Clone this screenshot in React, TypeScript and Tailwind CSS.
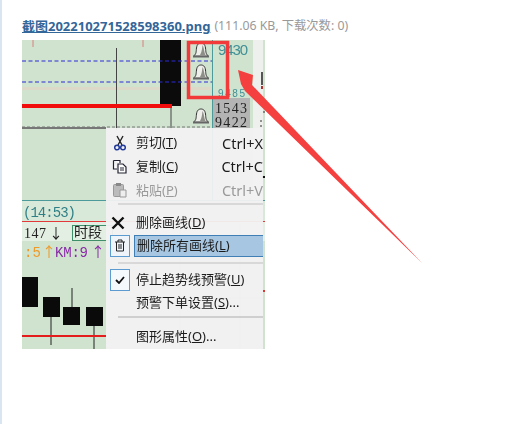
const cjk = '"Noto Sans","Noto Sans CJK SC",sans-serif';

function Bell({ x, y }: { x: number; y: number }) {
  return (
    <g transform={`translate(${x} ${y})`}>
      <path d="M-7.500 6 C-4.500 4 -5 2 -4.500 -2 C-4 -6 -2 -7 0 -7 C2 -7 4 -6 4.500 -2 C5 2 4.500 4 7.500 6 Z" fill="#eeeeea" stroke="#333" strokeWidth="1" />
      <path d="M1.500 -5 C3 -3 3 2 4.500 5 L-1 5 C1 2 1 -2 1.500 -5Z" fill="#8f8f8a" />
      <rect x="-8" y="6" width="16" height="1.500" fill="#666" />
    </g>
  );
}

function Chart() {
  return (
    <svg width="243" height="309" viewBox="22 40 243 309" className="absolute left-0 top-0 block">
      <rect x="22" y="40" width="243" height="309" fill="#cfe3cf" />
      <rect x="253" y="40" width="10" height="160" fill="#eef0ee" />
      <rect x="22" y="87" width="190" height="3" fill="#dcd9c9" />
      <rect x="212" y="40" width="1" height="160" fill="#4d9a9a" />
      <path d="M33 40V47M143 40V47" stroke="#d88080" strokeWidth="1" />
      <rect x="160" y="40" width="21" height="66" fill="#0b0b0b" />
      <path d="M22 61H212M22 82H212" stroke="#2a2ad8" strokeWidth="1" strokeDasharray="4 2.500" />
      <path d="M116.500 48V130M171 106V130" stroke="#444" strokeWidth="1" />
      <rect x="22" y="104" width="150" height="4" fill="#f20d0d" />
      <Bell x={201} y={50} />
      <Bell x={201} y={72} />
      <Bell x={201} y={116} />
      <text x="218" y="55" fontSize="15" fill="#3f8f96" fontFamily="Liberation Sans, sans-serif" textLength="30">9430</text>
      <text x="218" y="97" fontSize="10" fill="#3f8f96" fontFamily="Liberation Sans, sans-serif" textLength="27">9485</text>
      <rect x="213" y="98" width="37" height="31" fill="#b4b4b4" />
      <text x="215" y="113" fontSize="14" fill="#222" fontFamily="Liberation Serif, serif" textLength="32">1543</text>
      <text x="215" y="127" fontSize="14" fill="#222" fontFamily="Liberation Serif, serif" textLength="32">9422</text>
      <path d="M22 127H212" stroke="#777" strokeWidth="1" strokeDasharray="3 2" />
      <rect x="22" y="127" width="84" height="2" fill="#777" />
      <path d="M262 72V85" stroke="#222" strokeWidth="1.500" />
      <rect x="261" y="86" width="2" height="3" fill="#b03030" />
      <path d="M263 112H265M260 121H262M260 126H262" stroke="#333" strokeWidth="1" />
      <rect x="22" y="200" width="243" height="1" fill="#4d9a9a" />
      <rect x="22" y="201" width="243" height="20" fill="#d9e9d9" />
      <text x="23" y="217" fontSize="14" fill="#2f7f86" fontFamily="Liberation Mono, monospace" textLength="53">(14:53)</text>
      <rect x="22" y="221" width="243" height="1" fill="#e23a3a" />
      <rect x="22" y="222" width="243" height="19" fill="#e4efe4" />
      <text x="24" y="238" fontSize="14" fill="#222" fontFamily="Liberation Serif, serif" textLength="22">147</text>
      <text x="49" y="238" fontSize="14" fill="#222" fontFamily={cjk}>↓</text>
      <rect x="72.500" y="225.500" width="40" height="15" fill="none" stroke="#3f8f6a" />
      <text x="74" y="237" fontSize="14" fill="#222" fontFamily={cjk}>时段</text>
      <text x="24" y="257" fontSize="14" fill="#ee9a2a" fontFamily="Liberation Mono, monospace">:5</text>
      <text x="42" y="257" fontSize="14" fill="#ee9a2a" fontFamily={cjk}>↑</text>
      <text x="55" y="257" fontSize="14" fill="#8a2aa8" fontFamily="Liberation Mono, monospace" textLength="33">KM:9</text>
      <text x="91" y="257" fontSize="14" fill="#8a2aa8" fontFamily={cjk}>↑</text>
      <rect x="22" y="277" width="16" height="30" fill="#0a0a0a" />
      <rect x="43" y="297" width="17" height="20" fill="#0a0a0a" />
      <rect x="63" y="307" width="17" height="18" fill="#0a0a0a" />
      <rect x="86" y="307" width="17" height="19" fill="#0a0a0a" />
      <path d="M51 317V345M72 288V307M94 326V349" stroke="#222" strokeWidth="1" />
      <rect x="22" y="335" width="84" height="2" fill="#e51c1c" />
      <path d="M110 298H263M240 200V349M180 200V349" stroke="#b9b9b9" strokeWidth="1" opacity="0.4" />
      <rect x="262" y="176" width="3" height="2" fill="#111" />
      <rect x="263" y="290" width="2" height="2" fill="#d33" />
    </svg>
  );
}

function Row({ text, u, after, shortcut, dim, h, icon }: { text: string; u: string; after?: string; shortcut?: string; dim?: boolean; h: string; icon?: React.ReactNode }) {
  return (
    <div className={`flex items-center ${h}`}>
      <div className="flex w-[29px] shrink-0 items-center justify-center">{icon}</div>
      <span className={`whitespace-nowrap text-[13px] leading-none ${dim ? "text-[#9a9a9a]" : "text-[#1c1c1c]"}`}>
        {text}(<span className="underline">{u}</span>){after}
      </span>
      {shortcut && <span className={`ml-auto whitespace-nowrap text-[14.500px] leading-none ${dim ? "text-[#9a9a9a]" : "text-[#1c1c1c]"}`}>{shortcut}</span>}
    </div>
  );
}

function Menu() {
  return (
    <div className="absolute left-[84px] top-[88px] flex h-[221px] w-[157px] flex-col bg-[#f1f1f1]/95 pl-[1px] pt-[3px]" style={{ fontFamily: cjk }}>
      <Row text="剪切" u="T" shortcut="Ctrl+X" h="h-[24px]" icon={
        <svg width="14" height="16" viewBox="0 0 14 16" className="mr-[4px]"><path d="M4 1L9 10M10 1L5 10" stroke="#222" strokeWidth="1.400" fill="none" /><circle cx="4" cy="12.500" r="2.300" stroke="#223a99" strokeWidth="1.500" fill="none" /><circle cx="10" cy="12.500" r="2.300" stroke="#223a99" strokeWidth="1.500" fill="none" /></svg>
      } />
      <Row text="复制" u="C" shortcut="Ctrl+C" h="h-[24px]" icon={
        <svg width="16" height="15" viewBox="0 0 16 15" className="mr-[4px]"><path d="M1.500 1.500H8V4M1.500 1.500V10H5" stroke="#223" strokeWidth="1.200" fill="#fff" /><path d="M6 5H11L14 8V14H6Z" stroke="#223" strokeWidth="1.200" fill="#fff" /><path d="M8 9H12M8 11H12" stroke="#223" /></svg>
      } />
      <Row text="粘贴" u="P" shortcut="Ctrl+V" dim h="h-[24px]" icon={
        <svg width="16" height="16" viewBox="0 0 16 16" className="mr-[4px]"><rect x="1.500" y="2.500" width="10" height="12" rx="1" fill="#bbb" stroke="#999" /><rect x="4" y="1" width="5" height="3" fill="#888" /><path d="M8 8H14V15H8Z" fill="#eee" stroke="#999" /></svg>
      } />
      <div className="ml-[11px] mt-[1px] h-[2px] w-[145px] bg-[#d8d8d8]" />
      <div className="h-[6px]" />
      <Row text="删除画线" u="D" h="h-[24px]" icon={
        <svg width="14" height="14" viewBox="0 0 14 14" className="mr-[8px]"><path d="M1.500 1.500L12.500 12.500M12.500 1.500L1.500 12.500" stroke="#111" strokeWidth="2.400" /></svg>
      } />
      <div className="flex h-[22px] items-stretch">
        <div className="ml-[3px] flex w-[20px] shrink-0 items-center justify-center border border-[#5b9bd0] bg-[#eef4fa]">
          <svg width="12" height="13" viewBox="0 0 12 13"><path d="M1 3H11M4 3V1H8V3M2.500 3V12H9.500V3M5 5V10M7 5V10" stroke="#222" strokeWidth="1" fill="none" /></svg>
        </div>
        <div className="ml-[4px] flex flex-1 items-center border-y border-l border-[#3f7fb5] bg-[#a7c6e1] pl-[2px]">
          <span className="whitespace-nowrap text-[13px] leading-none text-[#1c1c1c]">删除所有画线(<span className="underline">L</span>)</span>
        </div>
      </div>
      <div className="ml-[11px] mt-[5px] h-[2px] w-[145px] bg-[#d8d8d8]" />
      <div className="mt-[5px] flex h-[22px] items-center">
        <div className="ml-[3px] mr-[6px] flex h-[22px] w-[20px] shrink-0 items-center justify-center border border-[#5b9bd0] bg-[#f6f9fc]">
          <svg width="10" height="8" viewBox="0 0 10 8"><path d="M1 4L4 7L9 1" stroke="#111" strokeWidth="1.800" fill="none" /></svg>
        </div>
        <span className="whitespace-nowrap text-[13px] leading-none text-[#1c1c1c]">停止趋势线预警(<span className="underline">U</span>)</span>
      </div>
      <Row text="预警下单设置" u="S" after="..." h="h-[24px]" />
      <div className="ml-[11px] mt-[2px] h-[2px] w-[145px] bg-[#cfcfcf]" />
      <div className="h-[5px]" />
      <Row text="图形属性" u="O" after="..." h="h-[26px]" />
    </div>
  );
}

export default function App() {
  return (
    <div className="relative h-[424px] w-[516px] overflow-hidden border-l-2 border-[#d9e5f0] bg-white pl-[20px] pt-[18px]" style={{ fontFamily: cjk }}>
      <div className="flex h-[16px] items-center whitespace-nowrap leading-[16px]">
        <span className="text-[13px] font-bold text-[#336699] underline">截图202210271528598360.png</span>
        <span className="ml-[4px] text-[12.300px] text-[#999]">(111.06 KB, 下载次数: 0)</span>
      </div>
      <div className="relative mt-[6px] h-[309px] w-[243px] overflow-hidden blur-[0.35px]">
        <Chart />
        <Menu />
      </div>
      <svg width="516" height="424" viewBox="0 0 516 424" className="absolute -left-[2px] top-0">
        <rect x="188.500" y="42.500" width="39" height="55" fill="none" stroke="#f23a3a" strokeWidth="3.500" />
        <polygon points="238,70 253,75 252,85 422,263 245,91 241,84" fill="#f4403f" />
      </svg>
    </div>
  );
}
